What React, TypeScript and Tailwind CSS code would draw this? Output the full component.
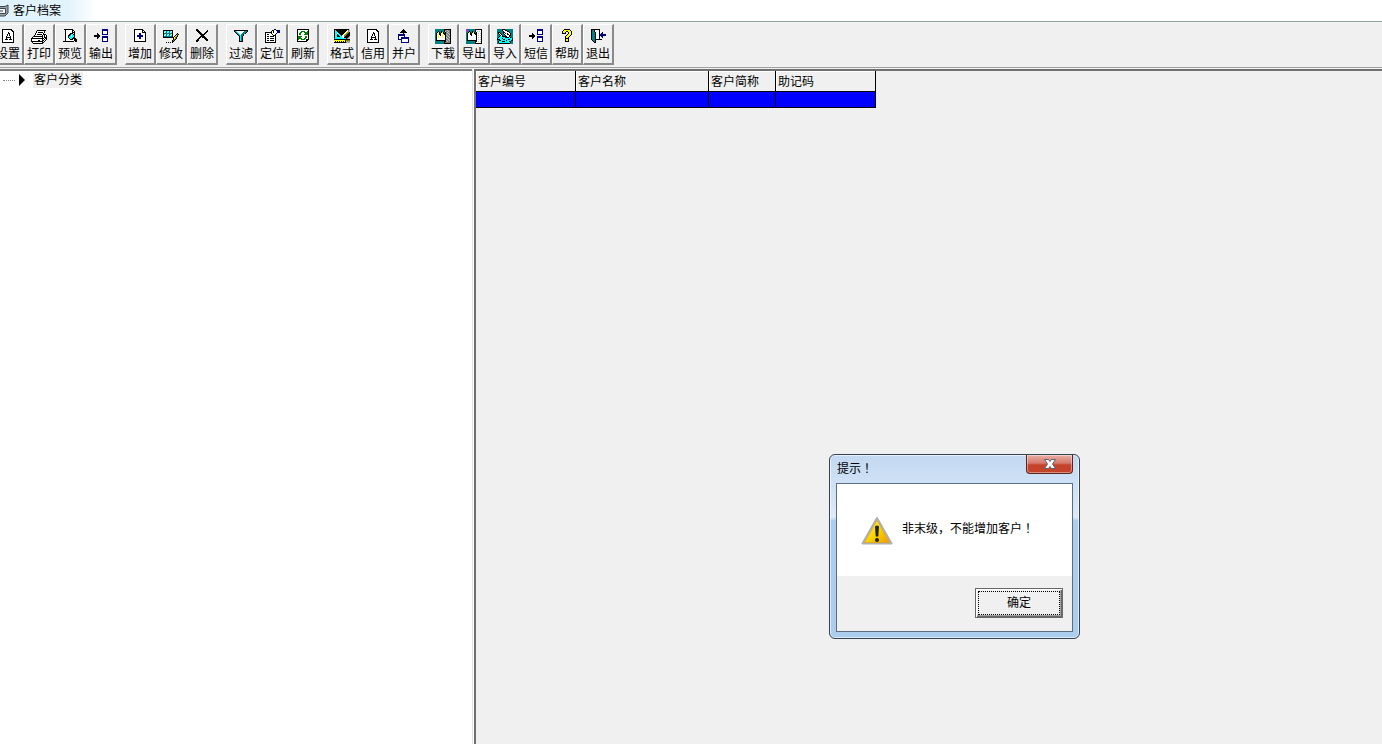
/**
 * CustomerArchive — 客户档案 window: toolbar, category tree, customer grid
 * and the alert shown when adding to a non-leaf category.
 */

import { useState } from 'react';
import { clsx } from 'clsx';

const PALETTE: Record<string, string> = {
  k: '#000000',
  w: '#ffffff',
  n: '#000080',
  b: '#0000ff',
  t: '#008080',
  c: '#00ffff',
  g: '#808080',
  s: '#c0c0c0',
  y: '#ffff00',
  o: '#808000',
  e: '#008000',
  m: '#ff00ff',
};

// 16x16 toolbar bitmaps, one character per pixel
const ICONS = {
  page: [
    '..kkkkkkkkkk....',
    '..kwwwwwwwwkk...',
    '..kwwwwwwwwwkk..',
    '..kwwwwwkwwwwk..',
    '..kwwwwwkkwwwk..',
    '..kwwwwkwkwwwk..',
    '..kwwwwkwkwwwk..',
    '..kwwwkwwwkwwk..',
    '..kwwwkkkkkwwk..',
    '..kwwwkwwwkwwk..',
    '..kwwkkkwkkkwk..',
    '..kwwwwwwwwwwk..',
    '..kwwwwwwwwwwk..',
    '..kkkkkkkkkkkk..',
  ],
  print: [
    '................',
    '......kkkkkkkkk.',
    '.....kwwwwwwwk..',
    '.....kwkkkkkwk..',
    '....kwwwwwwwk...',
    '....kwkkkkkwkkk.',
    '...kwwwwwwwkwkwk',
    '..kkkkkkkkkkwkwk',
    '.kwwwwwwwwwkwkkk',
    'kkkkkkkkkkkkkwkk',
    'kwwwwwwwwwwkwkwk',
    'kwwwwwwkkwwkkwk.',
    'kkkkkkkkkkkkwk..',
    '.kwwwwwwwwwkk...',
    '..kkkkkkkkkk....',
  ],
  preview: [
    '..kkkkkkkkk.....',
    '...kwwwwwwkk....',
    '...kwwwwwwkwk...',
    '...kwwwwwwkkk...',
    '...kwwwwkkkwk...',
    '...kwwwkkcckk...',
    '...kwwkkcwcck...',
    '...kwwkccwcck...',
    '...kwwkcccckk...',
    '...kwwwkcckkkk..',
    '...kwwwwkkkwkkk.',
    '...kwwwwwwwwkkk.',
    '.kkkkkkkkkkk.kk.',
  ],
  output: [
    '.........nnnnnn.',
    '.........nnnnnn.',
    '.........nwwwwn.',
    '.........nwwwwn.',
    '....k....nwwwwn.',
    '....kk...nnnnnn.',
    '.kkkkkk.........',
    '.kkkkkk..nnnnnn.',
    '....kk...nnnnnn.',
    '....k....nwwwwn.',
    '.........nwwwwn.',
    '.........nwwwwn.',
    '.........nnnnnn.',
  ],
  add: [
    '..kkkkkkkkk.....',
    '..kwwwwwwwkk....',
    '..kwwwwwwwkwk...',
    '..kwwwwwwwkkkk..',
    '..kwwwwnnwwwwk..',
    '..kwwwwnnwwwwk..',
    '..kwwnnnnnnwwk..',
    '..kwwnnnnnnwwk..',
    '..kwwwwnnwwwwk..',
    '..kwwwwnnwwwwk..',
    '..kwwwwwwwwwwk..',
    '..kwwwwwwwwwwk..',
    '..kkkkkkkkkkkk..',
  ],
  edit: [
    '................',
    'kkkkkkkkkk......',
    'kcwtcwtcwk......',
    'kwctwctwck......',
    'kttttttttk....k.',
    'kcwtcwtcwk...kok',
    'kwctwctwck..kyk.',
    'kttttttttk.kyok.',
    'kkkkkkkkkkkyok..',
    '..........kyok..',
    '..........kok...',
    '.........kok....',
    '.........kk.....',
    '...k.k.k.k......',
  ],
  remove: [
    '..kk............',
    '..kkk........k..',
    '...kkk......kk..',
    '....kkk....kk...',
    '.....kkk..kk....',
    '......kkkkk.....',
    '.......kkk......',
    '......kkkkk.....',
    '.....kk.kkkk....',
    '....kk....kkk...',
    '...kk......kkk..',
    '..kkk.......kk..',
    '..kk............',
  ],
  filter: [
    '................',
    '.kkkkkkkkkkkkkk.',
    '.ktcwwwwwwwtttk.',
    '..ktcwwwwwtttk..',
    '...ktcwwwtttk...',
    '....ktcwttk.....',
    '.....ktcttk.....',
    '......kctk......',
    '......kctk......',
    '......kctk......',
    '......kctk......',
    '......kctk......',
    '......kkkk......',
  ],
  locate: [
    '..........kk....',
    '........kkwwknnn',
    '.......kwkwwwnnn',
    '.kkkkkkkwkwwwnnn',
    '.kwwwwwkwwwwk...',
    '.kwkkwwwkwwk....',
    '.kwwwwwwwkkk....',
    '.kwkkwkkkkwk....',
    '.kwwwwwwwwwk....',
    '.kwkkwkkkkwk....',
    '.kwwwwwwwwwk....',
    '.kwkkwkkkkwk....',
    '.kwwwwwwwwwk....',
    '.kkkkkkkkkkk....',
  ],
  refresh: [
    '..kkkkkkkkkkkk..',
    '..kwwwwwwwwwwk..',
    '..kwwweeeewwek..',
    '..kwweewweeeek..',
    '..kweewwwweeek..',
    '..kweewwweeeek..',
    '..kwwwwwwwwwwk..',
    '..keeeewwweewk..',
    '..keeewwwweewk..',
    '..keeeewweewwk..',
    '..kewweeeewkkk..',
    '..kwwwwwwwwkk...',
    '..kkkkkkkkkk....',
  ],
  format: [
    'kkkkkkkkkkkkkkks',
    'kckkkkkkkkkkkwgs',
    'kcckkkkkkkkkwygs',
    'kccckkkkkkkwyogk',
    'kccwckkkkkwyogkk',
    'kcckcckkkwyogkkk',
    'kcckkcckwwogkkkk',
    'kcckkkccwwgkkkkg',
    'kcccccccwwkkkkgs',
    'tccccccccccckgss',
    'kkkkkkkkkkkkkkkk',
    'yyyyyyyyyyykoooo',
    'ykykykykykyksgsg',
    'kkkkkkkkkkkkgsgs',
  ],
  merge: [
    '.......k........',
    '......kkk.......',
    '.....kkkkk......',
    '....kkkkkkk.....',
    '.......k........',
    '..nnnnnnn.......',
    '..nnnnnnn.......',
    '..nwwwwwn.......',
    '..nwwnnnnnnnn...',
    '..nwwnnnnnnnn...',
    '..nnnnwwwwwwn...',
    '.....nwwwwwwn...',
    '.....nwwwwwwn...',
    '.....nnnnnnnn...',
  ],
  download: [
    'tttttttttkkkkkkk',
    'tttttttttkggsggk',
    'tttkttkttksggsgk',
    'ttkyktkyktkgsggk',
    'tkwykkwykkkggsgk',
    'tkwykkwywkksggsk',
    'tkwywkwywwkgsggk',
    'tkwywwwywwkggsgk',
    'tkwywwwywwksggsk',
    'tkwwwwwwwwkgsggk',
    'tkwwwwwwwwkggsgk',
    'tkkkkkkkkkksggsk',
    'tttttttttkkgsggk',
    'tttttttttkgggggk',
    'tttttttttkkkkkkk',
  ],
  export: [
    'mttttttttkkkkkkk',
    'mmtttttttkwwwwwk',
    'mttkttkttkwswswk',
    'ttkyktkyktkwwwwk',
    'tkwykkwykkkwswsk',
    'tkwwkkwwwkkwwwwk',
    'tkwwwkwwwwkwswsk',
    'tkwwwwwwwwkwwwwk',
    'tkwwwwwwwwkwswsk',
    'tkwwwwwwwwkwwwwk',
    'tkwwwwwwwwkwswsk',
    'tkkkkkkkkkkwwwwk',
    'tttttttttkkwswsk',
    'tttttttttkwwwwwk',
    'tttttttttkkkkkkk',
  ],
  import: [
    'tttttkkktttttttt',
    'tttttkwwkktttttt',
    'ttttttkwwwkktttt',
    'tkktttkkwwwwkttt',
    'tkwkttkwkwkwwktt',
    'ttkwkttkwwkkwktt',
    'tttkwkttkwwwkktt',
    'ttkcckkkkkwwkttt',
    'tkcccccckkkkcktt',
    'kcccckccccccccck',
    'kkkccckkccckkcck',
    'ttkkccccckcccckk',
    'tkccckkkcccckktt',
    'tkcccccccccccktt',
    'ttkkkkkkkkkkkttt',
  ],
  help: [
    '.....kkkkkk.....',
    '....kyyyyyyk....',
    '...kyyykkyyyk...',
    '...kyyk..kyyk...',
    '...kkkk..kyyk...',
    '........kyyyk...',
    '.......kyyyk....',
    '......kyyyk.....',
    '......kyyk......',
    '......kkkk......',
    '......kyyk......',
    '......kyyk......',
    '......kkkk......',
  ],
  exit: [
    '.kkkkkkkkk......',
    '.kttkwwwwk......',
    '.kttkwwwwk......',
    '.ktttkwwwk..n...',
    '.ktttkwwwk.nn...',
    '.ktttkwwwknnnnnn',
    '.ktttkwwwknnnnnn',
    '.ktttkwwwk.nn...',
    '.ktttkwwwk..n...',
    '.ktttkwwwk......',
    '.ktttkkkkkkk....',
    '..kttk..........',
    '...ktk..........',
    '....kk..........',
  ],
};

type IconName = keyof typeof ICONS;

const TOOLBAR: Array<Array<{ label: string; icon: IconName }>> = [
  [
    { label: '设置', icon: 'page' },
    { label: '打印', icon: 'print' },
    { label: '预览', icon: 'preview' },
    { label: '输出', icon: 'output' },
  ],
  [
    { label: '增加', icon: 'add' },
    { label: '修改', icon: 'edit' },
    { label: '删除', icon: 'remove' },
  ],
  [
    { label: '过滤', icon: 'filter' },
    { label: '定位', icon: 'locate' },
    { label: '刷新', icon: 'refresh' },
  ],
  [
    { label: '格式', icon: 'format' },
    { label: '信用', icon: 'page' },
    { label: '并户', icon: 'merge' },
  ],
  [
    { label: '下载', icon: 'download' },
    { label: '导出', icon: 'export' },
    { label: '导入', icon: 'import' },
    { label: '短信', icon: 'output' },
    { label: '帮助', icon: 'help' },
    { label: '退出', icon: 'exit' },
  ],
];

const COLUMNS = [
  { label: '客户编号', width: 'w-[100px]' },
  { label: '客户名称', width: 'w-[133px]' },
  { label: '客户简称', width: 'w-[67px]' },
  { label: '助记码', width: 'w-[100px]' },
];

function PixelIcon({ name }: { name: IconName }) {
  return (
    <svg className="h-4 w-4 shrink-0" viewBox="0 0 16 16" shapeRendering="crispEdges" aria-hidden="true">
      {ICONS[name].flatMap((row, y) =>
        row.split('').map((c, x) =>
          c === '.' ? null : <rect key={`${x}-${y}`} x={x} y={y} width="1" height="1" fill={PALETTE[c]} />
        )
      )}
    </svg>
  );
}

function WarningIcon() {
  return (
    <svg className="h-8 w-8 shrink-0" viewBox="0 0 32 32" aria-hidden="true">
      <defs>
        <linearGradient id="warn" x1="0" y1="0" x2="1" y2="1">
          <stop offset="0" stopColor="#fff36a" />
          <stop offset="0.5" stopColor="#fbd800" />
          <stop offset="1" stopColor="#f09a00" />
        </linearGradient>
      </defs>
      <path d="M16 3 L30.5 28.500 H1.500 Z" fill="#d4d4d4" stroke="#b0b0b0" strokeWidth="2" strokeLinejoin="round" />
      <path d="M16 5.500 L28.500 27.500 H3.500 Z" fill="url(#warn)" stroke="#d99a00" strokeWidth="0.6" />
      <path d="M14 11.500 Q16 9.500 18 11.500 L17.300 21 Q16 22.500 14.700 21 Z" fill="#222" />
      <circle cx="16" cy="25" r="2" fill="#222" />
    </svg>
  );
}

// Full-width exclamation mark, centred in its cell
function Bang() {
  return <span className="font-['Noto_Sans_CJK_JP',sans-serif]">！</span>;
}

function AlertDialog({ onClose }: { onClose: () => void }) {
  return (
    <div
      role="alertdialog"
      aria-labelledby="alert-title"
      aria-describedby="alert-text"
      className="absolute left-[829px] top-[454px] flex w-[251px] flex-col rounded-md border border-[#35424f] bg-linear-to-b from-[#c3d9f1] from-0% via-[#dceafa] via-34% to-[#abcdee] to-36% px-[6px] pb-[6px] inset-ring inset-ring-white/60"
    >
      <div className="flex h-7 items-start justify-between pl-px">
        <h2 id="alert-title" className="mt-[3px] leading-5">
          提示
          <Bang />
        </h2>
        <button
          aria-label="关闭"
          onClick={onClose}
          className="flex h-[19px] w-[47px] items-center justify-center rounded-b border border-t-0 border-[#5a2420] bg-linear-to-b from-[#e8b0a6] from-0% via-[#d5796b] via-45% to-[#c4432a] to-55% inset-ring inset-ring-white/40"
        >
          <svg className="h-3 w-[14px]" viewBox="0 0 14 12" aria-hidden="true">
            <path d="M1.500 1.500 H5.500 L7 3.500 L8.500 1.500 H12.500 L9.500 6 L12.500 10.500 H8.500 L7 8.500 L5.500 10.500 H1.500 L4.500 6 Z" fill="#fff" stroke="#59606e" />
          </svg>
        </button>
      </div>
      <div className="border border-[#5c6d80] bg-[#f0f0f0]">
        <div className="flex h-[92px] items-center gap-[9px] bg-white pl-6 pt-[2px]">
          <WarningIcon />
          <p id="alert-text" className="pb-[6px]">
            非末级，不能增加客户
            <Bang />
          </p>
        </div>
        <div className="flex justify-end pb-[13px] pr-[9px] pt-3">
          <button
            onClick={onClose}
            className="h-[30px] w-[88px] border border-[#696969] bg-[#f0f0f0] p-[2px] shadow-[inset_1px_1px_0_#fff,inset_-1px_-1px_0_#696969,inset_-2px_-2px_0_#a0a0a0]"
          >
            <span className="flex h-6 items-center justify-center border border-dotted border-black">确定</span>
          </button>
        </div>
      </div>
    </div>
  );
}

export default function App() {
  const [alertOpen, setAlertOpen] = useState(true);

  return (
    <div className="relative flex h-screen flex-col overflow-hidden bg-[#f0f0f0] font-['Liberation_Sans','Noto_Sans_CJK_SC',sans-serif] text-xs text-black">
      {/* Title bar */}
      <header className="flex h-[21px] shrink-0 items-center gap-1 bg-linear-to-r from-[#dff3fd] from-0% via-[#e3f3fc] via-5% to-white to-7%">
        <svg className="h-4 w-[9px]" viewBox="0 0 9 16" aria-hidden="true">
          <path d="M0 3.500 H5 L8 2 V10 L5 13 H0" fill="#9aa3a8" stroke="#3c4650" />
          <path d="M0 5.500 H5.500 V10.500 H0" fill="#f4f4f4" stroke="#3c4650" />
          <path d="M0 8 H3" stroke="#3c4650" />
        </svg>
        <h1 className="leading-5">客户档案</h1>
      </header>

      {/* Toolbar */}
      <div role="toolbar" className="flex shrink-0 gap-2 overflow-hidden border-t border-[#97a5a0] pb-[2px] pt-[2px]">
        {TOOLBAR.map((group, i) => (
          <div key={group[0].label} className={clsx('flex shrink-0', i === 0 && '-ml-[7px]')}>
            {group.map(({ label, icon }) => (
              <button
                key={label}
                onClick={label === '增加' ? () => setAlertOpen(true) : undefined}
                className="flex h-[41px] w-[31px] flex-col items-center border-b-2 border-l border-r-2 border-t border-b-[#8a8a8a] border-l-white border-r-[#8a8a8a] border-t-white pt-1"
              >
                <PixelIcon name={icon} />
                <span className="whitespace-nowrap leading-[18px]">{label}</span>
              </button>
            ))}
          </div>
        ))}
      </div>

      <main className="flex min-h-0 flex-1 border-t border-[#a0a0a0] pt-px">
        {/* Category tree */}
        <nav className="w-[472px] shrink-0 border-t-2 border-[#808080] bg-white pt-px">
          <ul>
            <li className="flex h-4 items-center">
              <span className="ml-[3px] w-3 border-t border-dotted border-[#808080]" />
              <svg className="ml-1 h-3 w-[6px]" viewBox="0 0 6 12" aria-hidden="true">
                <path d="M0 0 L6 6 L0 12 Z" />
              </svg>
              <button className="ml-2 h-4 bg-[#f0f0f0] px-px leading-4">客户分类</button>
            </li>
          </ul>
        </nav>
        <div className="w-[2px] shrink-0 border-l border-[#e3e3e3] bg-white" />

        {/* Customer grid */}
        <section className="min-w-0 flex-1 border-l-2 border-t-2 border-[#707070]">
          <table className="w-[400px] table-fixed border-separate border-spacing-0">
            <thead>
              <tr>
                {COLUMNS.map(({ label, width }) => (
                  <th
                    key={label}
                    scope="col"
                    className={clsx(
                      'h-[21px] border-b border-r border-black p-0 pl-[2px] pt-px text-left font-normal leading-4 shadow-[inset_1px_1px_0_#fff]',
                      width
                    )}
                  >
                    {label}
                  </th>
                ))}
              </tr>
            </thead>
            <tbody>
              <tr className="bg-[#0000ff]">
                {COLUMNS.map(({ label }) => (
                  <td key={label} className="h-4 border-b border-r border-black p-0" />
                ))}
              </tr>
            </tbody>
          </table>
        </section>
      </main>

      {alertOpen && <AlertDialog onClose={() => setAlertOpen(false)} />}
    </div>
  );
}
